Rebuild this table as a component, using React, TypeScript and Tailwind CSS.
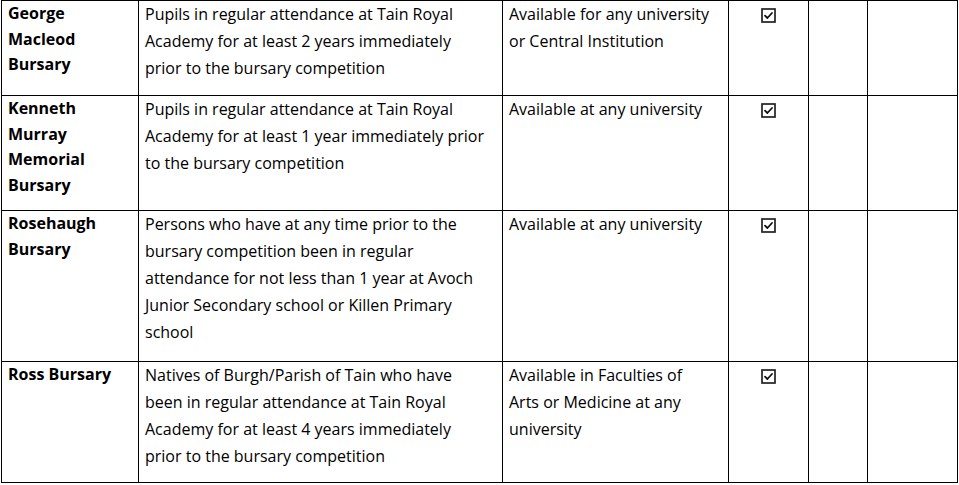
import React from "react";

const Check = () => (
  <svg width="15" height="15" viewBox="0 0 15 15" className="block">
    <rect x="1" y="1" width="13" height="13" fill="white" stroke="#222" strokeWidth="1.7" />
    <path d="M4 7.6 L6.4 10 L11 5" fill="none" stroke="#111" strokeWidth="1.8" strokeLinecap="round" strokeLinejoin="round" />
  </svg>
);

type Row = { h: string; name: string[]; desc: string[]; avail: string[] };

const rows: Row[] = [
  {
    h: "h-[95px]",
    name: ["George", "Macleod", "Bursary"],
    desc: [
      "Pupils in regular attendance at Tain Royal",
      "Academy for at least 2 years immediately",
      "prior to the bursary competition",
    ],
    avail: ["Available for any university", "or Central Institution"],
  },
  {
    h: "h-[115px]",
    name: ["Kenneth", "Murray", "Memorial", "Bursary"],
    desc: [
      "Pupils in regular attendance at Tain Royal",
      "Academy for at least 1 year immediately prior",
      "to the bursary competition",
    ],
    avail: ["Available at any university"],
  },
  {
    h: "h-[151px]",
    name: ["Rosehaugh", "Bursary"],
    desc: [
      "Persons who have at any time prior to the",
      "bursary competition been in regular",
      "attendance for not less than 1 year at Avoch",
      "Junior Secondary school or Killen Primary",
      "school",
    ],
    avail: ["Available at any university"],
  },
  {
    h: "h-[121px]",
    name: ["Ross Bursary"],
    desc: [
      "Natives of Burgh/Parish of Tain who have",
      "been in regular attendance at Tain Royal",
      "Academy for at least 4 years immediately",
      "prior to the bursary competition",
    ],
    avail: ["Available in Faculties of", "Arts or Medicine at any", "university"],
  },
];

export default function App() {
  return (
    <div
      className="w-[959px] h-[485px] bg-white overflow-hidden text-black"
      style={{ fontFamily: '"Open Sans", "Noto Sans", sans-serif' }}
    >
      <div className="ml-[1px] w-[957px] border-l border-t border-black">
        {rows.map((r, i) => (
          <div key={i} className={`flex ${r.h} box-content`}>
            <div className="w-[137px] shrink-0 border-r border-b border-black pl-[6px] pt-[1px]">
              <div className="font-bold text-[16px] leading-[25.5px] -mt-[1px]">
                {r.name.map((l, j) => (
                  <div key={j} className="whitespace-nowrap">{l}</div>
                ))}
              </div>
            </div>
            <div className="w-[364px] shrink-0 border-r border-b border-black pl-[6px] pt-[1px]">
              <div className="text-[16px] leading-[27px] -mt-[1px]">
                {r.desc.map((l, j) => (
                  <div key={j} className="whitespace-nowrap">{l}</div>
                ))}
              </div>
            </div>
            <div className="w-[226px] shrink-0 border-r border-b border-black pl-[6px] pt-[1px]">
              <div className="text-[16px] leading-[27px] -mt-[1px]">
                {r.avail.map((l, j) => (
                  <div key={j} className="whitespace-nowrap">{l}</div>
                ))}
              </div>
            </div>
            <div className="w-[80px] shrink-0 border-r border-b border-black flex justify-center pt-[7px] pr-[1px]">
              <div><Check /></div>
            </div>
            <div className="w-[59px] shrink-0 border-r border-b border-black" />
            <div className="w-[90px] shrink-0 border-r border-b border-black" />
          </div>
        ))}
      </div>
    </div>
  );
}
